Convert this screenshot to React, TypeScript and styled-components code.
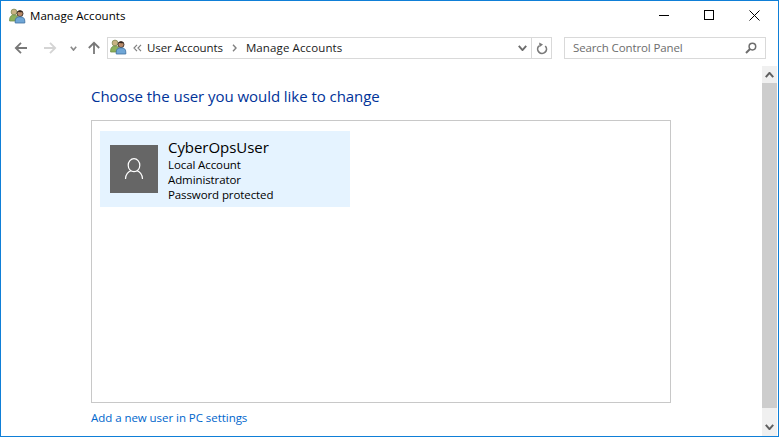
import React from "react"
import styled, { createGlobalStyle } from "styled-components"

const GlobalStyle = createGlobalStyle`
    html, body {
        margin: 0;
        padding: 0;
        background: #fff;
    }
    body {
        font-family: "Open Sans", "Noto Sans", "Liberation Sans", sans-serif;
    }
`

const Window = styled.div`
    box-sizing: border-box;
    width: 779px;
    height: 437px;
    border: 1px solid #0f7fd7;
    display: flex;
    flex-direction: column;
    overflow: hidden;
    background: #fff;
`

const TitleBar = styled.div`
    height: 29px;
    flex: none;
    display: flex;
    align-items: center;
    padding: 0 1px 0 8px;
`

const WindowTitle = styled.span`
    margin-left: 4px;
    font-size: 11.5px;
    letter-spacing: 0.05px;
    color: #000;
    flex: 1;
`

const CaptionButton = styled.div`
    width: 45px;
    height: 29px;
    margin-top: -1px;
    display: flex;
    align-items: center;
    justify-content: center;
`

const NavBar = styled.div`
    height: 22px;
    margin-top: 7px;
    flex: none;
    display: flex;
    align-items: center;
    padding-left: 13px;
`

const NavButton = styled.div<{ $width: number }>`
    width: ${(p) => p.$width}px;
    height: 22px;
    display: flex;
    align-items: center;
    justify-content: flex-start;
`

const AddressBox = styled.div`
    box-sizing: border-box;
    width: 445px;
    height: 22px;
    margin-left: 3px;
    border: 1px solid #d9d9d9;
    display: flex;
    align-items: center;
    padding-left: 2px;
    font-size: 11.5px;
    color: #1a1a1a;
`

const AddressIcon = styled.span`
    display: flex;
    margin-bottom: 3px;
`

const Crumb = styled.span<{ $spacing: number }>`
    white-space: nowrap;
    padding-bottom: 2px;
    letter-spacing: ${(p) => p.$spacing}px;
`

const CrumbChevrons = styled.span<{ $left: number; $right: number }>`
    display: flex;
    margin: 0 ${(p) => p.$right}px 0 ${(p) => p.$left}px;
`

const AddressEnd = styled.div`
    margin-left: auto;
    height: 100%;
    display: flex;
    align-items: center;
`

const DropSlot = styled.div`
    width: 18px;
    display: flex;
    justify-content: center;
`

const RefreshSlot = styled.div`
    box-sizing: border-box;
    width: 20px;
    height: 100%;
    border-left: 1px solid #d9d9d9;
    display: flex;
    align-items: center;
    justify-content: center;
`

const SearchBox = styled.div`
    box-sizing: border-box;
    width: 202px;
    height: 22px;
    margin-left: 12px;
    border: 1px solid #d9d9d9;
    display: flex;
    align-items: center;
    justify-content: space-between;
    padding: 0 8px;
    font-size: 11.5px;
    letter-spacing: -0.12px;
    color: #6d6d6d;
`

const SearchLabel = styled.span`
    padding-bottom: 2px;
`

const Body = styled.div`
    flex: 1;
    min-height: 0;
    margin-top: 7px;
    display: flex;
`

const Content = styled.div`
    flex: 1;
    padding: 19px 0 0 90px;
`

const Heading = styled.h1`
    margin: 0;
    height: 22px;
    font-size: 15px;
    line-height: 22px;
    font-weight: 400;
    letter-spacing: -0.05px;
    color: #003399;
`

const AccountList = styled.div`
    box-sizing: border-box;
    width: 580px;
    height: 283px;
    margin-top: 13px;
    border: 1px solid #c8c8c8;
    padding: 10px 8px;
`

const AccountCard = styled.div`
    box-sizing: border-box;
    width: 250px;
    height: 76px;
    background: #e5f3ff;
    display: flex;
    align-items: center;
    padding-left: 10px;
`

const Avatar = styled.div`
    width: 48px;
    height: 48px;
    background: #666;
    display: flex;
    align-items: center;
    justify-content: center;
`

const AccountText = styled.div`
    margin-left: 10px;
    padding-top: 2px;
    display: flex;
    flex-direction: column;
    color: #000;
`

const AccountName = styled.div`
    font-size: 15px;
    line-height: 19px;
    letter-spacing: -0.05px;
`

const AccountLine = styled.div`
    font-size: 11.5px;
    line-height: 15px;
    letter-spacing: -0.1px;
`

const AddUserLink = styled.a`
    display: block;
    margin-top: 7px;
    font-size: 11.5px;
    line-height: 16px;
    letter-spacing: -0.05px;
    color: #0066cc;
`

const Scrollbar = styled.div`
    width: 15px;
    margin-right: 1px;
    flex: none;
    display: flex;
    flex-direction: column;
    background: #f0f0f0;
`

const ScrollUp = styled.div`
    height: 17px;
    flex: none;
    display: flex;
    align-items: center;
    justify-content: center;
`

const ScrollDown = styled.div`
    box-sizing: border-box;
    height: 28px;
    flex: none;
    display: flex;
    align-items: flex-end;
    justify-content: center;
    padding-bottom: 6px;
`

const ScrollThumb = styled.div`
    flex: 1;
    background: #cdcdcd;
`

const UsersIcon: React.FC = () => (
    <svg width="17" height="16" viewBox="0 0 17 16">
        <circle cx="5" cy="4" r="2.9" fill="#c9b283" stroke="#7f8a55" strokeWidth="0.8" />
        <path d="M0.6 12c0-3.4 1.7-5 4.4-5s4.4 1.6 4.4 5v1H0.6z" fill="#8cb05c" stroke="#6f8f48" strokeWidth="0.8" />
        <circle cx="11" cy="5.6" r="3" fill="#b98a68" stroke="#3b2c25" strokeWidth="0.9" />
        <path d="M6.2 15v-2c0-3 1.8-4.2 4.8-4.2s4.8 1.2 4.8 4.2v2z" fill="#6fa6d6" stroke="#3d6f9e" strokeWidth="0.8" />
        <path d="M8.2 3.8c1-1.4 4.6-1.4 5.6.2-1.6.4-3.8.4-5.6-.2z" fill="#33261f" />
    </svg>
)

const Arrow: React.FC<{ dir: "left" | "right" | "up"; color: string }> = ({ dir, color }) => {
    const rotate = dir === "left" ? 0 : dir === "right" ? 180 : 90
    return (
        <svg width="14" height="14" viewBox="0 0 14 14" style={{ transform: `rotate(${rotate}deg)` }}>
            <path d="M13 7H2M7 1.8 1.8 7 7 12.2" fill="none" stroke={color} strokeWidth="1.8" />
        </svg>
    )
}

const Chevron: React.FC<{ width: number; height: number; color: string; up?: boolean; stroke?: number }> = ({
    width,
    height,
    color,
    up,
    stroke = 1.6,
}) => (
    <svg width={width} height={height} viewBox={`0 0 ${width} ${height}`}>
        <path
            d={
                up
                    ? `M0.8 ${height - 0.8} ${width / 2} 0.9 ${width - 0.8} ${height - 0.8}`
                    : `M0.8 0.8 ${width / 2} ${height - 0.9} ${width - 0.8} 0.8`
            }
            fill="none"
            stroke={color}
            strokeWidth={stroke}
        />
    </svg>
)

const Crumbs: React.FC<{ double?: boolean }> = ({ double }) => (
    <svg width={double ? 9 : 5} height="8" viewBox={double ? "0 0 9 8" : "0 0 5 8"}>
        {double ? (
            <path d="M4 .8 1 4l3 3.2M8 .8 5 4l3 3.2" fill="none" stroke="#808080" strokeWidth="1.2" />
        ) : (
            <path d="M1 .8 4 4 1 7.2" fill="none" stroke="#808080" strokeWidth="1.4" />
        )}
    </svg>
)

const App: React.FC = () => {
    return (
        <Window>
            <GlobalStyle />
            <TitleBar>
                <UsersIcon />
                <WindowTitle>Manage Accounts</WindowTitle>
                <CaptionButton>
                    <svg width="11" height="11" viewBox="0 0 11 11">
                        <path d="M0 5.5h10" stroke="#000" strokeWidth="1" />
                    </svg>
                </CaptionButton>
                <CaptionButton>
                    <svg width="11" height="11" viewBox="0 0 11 11">
                        <rect x="0.5" y="0.5" width="9" height="9" fill="none" stroke="#000" />
                    </svg>
                </CaptionButton>
                <CaptionButton>
                    <svg width="11" height="11" viewBox="0 0 11 11">
                        <path d="M.5.5l10 10M10.5.5l-10 10" stroke="#000" strokeWidth="1" />
                    </svg>
                </CaptionButton>
            </TitleBar>
            <NavBar>
                <NavButton $width={29}>
                    <Arrow dir="left" color="#787878" />
                </NavButton>
                <NavButton $width={27}>
                    <Arrow dir="right" color="#d4d4d4" />
                </NavButton>
                <NavButton $width={17}>
                    <Chevron width={7} height={5} color="#8a8a8a" />
                </NavButton>
                <NavButton $width={17}>
                    <Arrow dir="up" color="#787878" />
                </NavButton>
                <AddressBox>
                    <AddressIcon>
                        <UsersIcon />
                    </AddressIcon>
                    <CrumbChevrons $left={6} $right={5}>
                        <Crumbs double />
                    </CrumbChevrons>
                    <Crumb $spacing={-0.08}>User Accounts</Crumb>
                    <CrumbChevrons $left={9} $right={9}>
                        <Crumbs />
                    </CrumbChevrons>
                    <Crumb $spacing={0.12}>Manage Accounts</Crumb>
                    <AddressEnd>
                        <DropSlot>
                            <Chevron width={9} height={6} color="#6d6d6d" stroke={1.9} />
                        </DropSlot>
                        <RefreshSlot>
                            <svg width="12" height="13" viewBox="0 0 12 13">
                                <path d="M6.2 2.6a4.4 4.4 0 1 1-4.5 4.4" fill="none" stroke="#7a7a7a" strokeWidth="1.7" transform="rotate(45 6 7)" />
                                <path d="M3.2 0.4 7 2.6 3.4 5.2z" fill="#7a7a7a" />
                            </svg>
                        </RefreshSlot>
                    </AddressEnd>
                </AddressBox>
                <SearchBox>
                    <SearchLabel>Search Control Panel</SearchLabel>
                    <svg width="12" height="12" viewBox="0 0 12 12">
                        <circle cx="7.4" cy="4.6" r="3.3" fill="none" stroke="#6d6d6d" strokeWidth="1.5" />
                        <path d="M5 7 1 11" stroke="#6d6d6d" strokeWidth="2" />
                    </svg>
                </SearchBox>
            </NavBar>
            <Body>
                <Content>
                    <Heading>Choose the user you would like to change</Heading>
                    <AccountList>
                        <AccountCard>
                            <Avatar>
                                <svg width="20" height="22" viewBox="0 0 20 22">
                                    <ellipse cx="10" cy="7.2" rx="5.8" ry="6.5" fill="none" stroke="#fff" strokeWidth="1.2" />
                                    <path d="M1.5 21c0-4.5 3-7.5 5.5-8.3M18.5 21c0-4.500-3-7.500-5.500-8.300" fill="none" stroke="#fff" strokeWidth="1.2" />
                                </svg>
                            </Avatar>
                            <AccountText>
                                <AccountName>CyberOpsUser</AccountName>
                                <AccountLine>Local Account</AccountLine>
                                <AccountLine>Administrator</AccountLine>
                                <AccountLine>Password protected</AccountLine>
                            </AccountText>
                        </AccountCard>
                    </AccountList>
                    <AddUserLink>Add a new user in PC settings</AddUserLink>
                </Content>
                <Scrollbar>
                    <ScrollUp>
                        <Chevron width={9} height={6} color="#606060" up stroke={2} />
                    </ScrollUp>
                    <ScrollThumb />
                    <ScrollDown>
                        <Chevron width={9} height={6} color="#606060" stroke={2} />
                    </ScrollDown>
                </Scrollbar>
            </Body>
        </Window>
    )
}

export default App
